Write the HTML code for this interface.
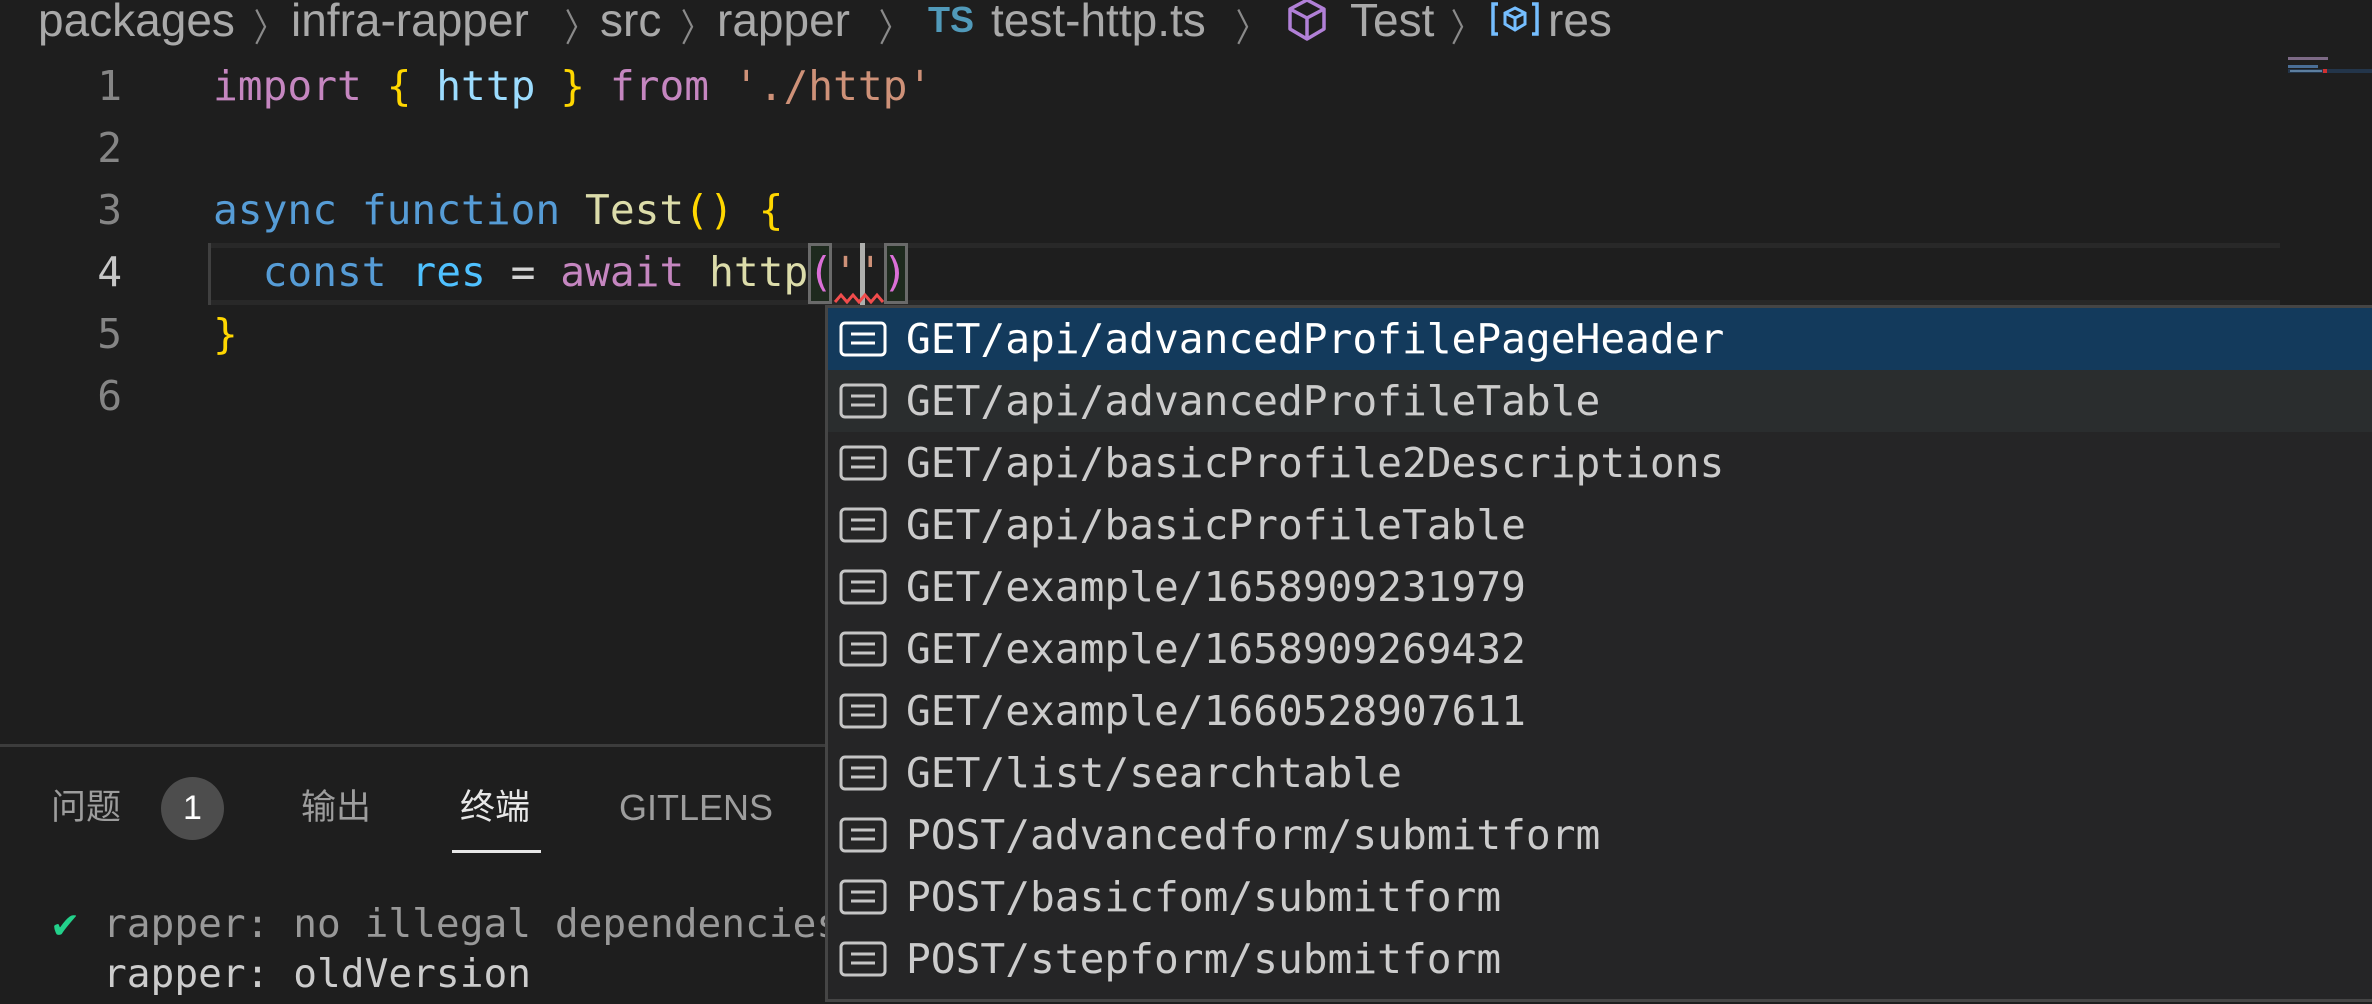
<!DOCTYPE html>
<html><head><meta charset="utf-8"><style>
*{margin:0;padding:0;box-sizing:border-box}
body{width:2372px;height:1004px;background:#1e1e1e;overflow:hidden;position:relative;font-family:"Liberation Sans","Noto Sans CJK SC",sans-serif}
.a{position:absolute;white-space:pre}
.bc{font-size:46px;color:#a9a9a9;top:-6px;line-height:52px}
.chev{font-size:38px;color:#8a8a8a;top:-3px;transform:scaleX(0.8)}
.mono{font-family:"DejaVu Sans Mono","Liberation Mono",monospace;font-size:41.2px;line-height:62px}
.ln{color:#858585;width:60px;text-align:right;left:62px}
.item{position:absolute;left:828px;width:1544px;height:62px}
.item svg{position:absolute;left:11px;top:13px}
.item span{position:absolute;left:78px;top:0;font-family:"DejaVu Sans Mono","Liberation Mono",monospace;font-size:41.2px;line-height:62px;color:#cccccc;white-space:pre}
</style></head><body>

<div class="a bc" style="left:38px">packages</div>
<div class="a chev" style="left:250px">〉</div>
<div class="a bc" style="left:291px">infra-rapper</div>
<div class="a chev" style="left:561px">〉</div>
<div class="a bc" style="left:600px">src</div>
<div class="a chev" style="left:677px">〉</div>
<div class="a bc" style="left:717px">rapper</div>
<div class="a chev" style="left:875px">〉</div>
<div class="a" style="left:928px;top:-2px;font-size:36px;font-weight:bold;color:#519aba;line-height:44px">TS</div>
<div class="a bc" style="left:991px">test-http.ts</div>
<div class="a chev" style="left:1232px">〉</div>
<svg class="a" style="left:1285px;top:-2px" width="44" height="44" viewBox="0 0 44 44"><path d="M22 2 L39 11 L39 31 L22 41 L5 31 L5 11 Z M5 11 L22 20 L39 11 M22 20 L22 41" fill="none" stroke="#b180d7" stroke-width="3.5" stroke-linejoin="round"/></svg>
<div class="a bc" style="left:1350px">Test</div>
<div class="a chev" style="left:1447px">〉</div>
<svg class="a" style="left:1490px;top:2px" width="50" height="34" viewBox="0 0 50 34"><path d="M8 2 H3 V32 H8 M42 2 H47 V32 H42" fill="none" stroke="#75beff" stroke-width="3.5"/><path d="M25 6 L35 11 L35 22 L25 28 L15 22 L15 11 Z M15 11 L25 16 L35 11 M25 16 L25 28" fill="none" stroke="#75beff" stroke-width="3"/></svg>
<div class="a bc" style="left:1548px">res</div>

<div class="a" style="left:2288px;top:57px;width:40px;height:3px;background:#7d6a86"></div>
<div class="a" style="left:2288px;top:65px;width:30px;height:3px;background:#4a6e96"></div>
<div class="a" style="left:2288px;top:69px;width:84px;height:4px;background:#23354a"></div>
<div class="a" style="left:2290px;top:70px;width:32px;height:2px;background:#5d7fa0"></div>
<div class="a" style="left:2323px;top:69px;width:4px;height:4px;background:#d03030"></div>

<div class="a" style="left:210px;top:243px;width:2070px;height:62px;border-top:5px solid #282828;border-bottom:5px solid #282828"></div>
<div class="a" style="left:208px;top:243px;width:3px;height:62px;background:#404040"></div>

<div class="a mono ln" style="top:55px">1</div>
<div class="a mono ln" style="top:117px">2</div>
<div class="a mono ln" style="top:179px">3</div>
<div class="a mono ln" style="top:241px;color:#c6c6c6">4</div>
<div class="a mono ln" style="top:303px">5</div>
<div class="a mono ln" style="top:365px">6</div>

<div class="a mono" style="left:213px;top:55px"><span style="color:#c586c0">import</span> <span style="color:#ffd700">{</span> <span style="color:#9cdcfe">http</span> <span style="color:#ffd700">}</span> <span style="color:#c586c0">from</span> <span style="color:#ce9178">'./http'</span></div>
<div class="a mono" style="left:213px;top:179px"><span style="color:#569cd6">async</span> <span style="color:#569cd6">function</span> <span style="color:#dcdcaa">Test</span><span style="color:#ffd700">()</span> <span style="color:#ffd700">{</span></div>
<div class="a" style="left:808px;top:243px;width:24px;height:61px;border:3px solid #6a6a6a;background:#1e2a1e"></div>
<div class="a" style="left:884px;top:243px;width:24px;height:61px;border:3px solid #6a6a6a;background:#1e2a1e"></div>
<div class="a mono" style="left:213px;top:241px"><span style="color:#d4d4d4">  </span><span style="color:#569cd6">const</span> <span style="color:#4fc1ff">res</span> <span style="color:#d4d4d4">=</span> <span style="color:#c586c0">await</span> <span style="color:#dcdcaa">http</span><span style="color:#da70d6">(</span><span style="color:#ce9178">''</span><span style="color:#da70d6">)</span></div>
<div class="a" style="left:860px;top:243px;width:5px;height:62px;background:#aeafad"></div>
<svg class="a" style="left:834px;top:292px" width="50" height="12"><path d="M1 10 L7 3 L13 10 L19 3 L25 10 L31 3 L37 10 L43 3 L49 10" fill="none" stroke="#f14c4c" stroke-width="3"/></svg>
<div class="a mono" style="left:213px;top:303px;color:#ffd700">}</div>

<div class="a" style="left:0;top:744px;width:2372px;height:3px;background:#3c3c3c"></div>
<div class="a" style="left:51px;top:786px;font-size:35px;color:#9d9d9d;line-height:44px">问题</div>
<div class="a" style="left:161px;top:777px;width:63px;height:63px;border-radius:50%;background:#4d4d4d;color:#fff;font-size:34px;text-align:center;line-height:63px">1</div>
<div class="a" style="left:301px;top:786px;font-size:35px;color:#9d9d9d;line-height:44px">输出</div>
<div class="a" style="left:460px;top:786px;font-size:35px;color:#e7e7e7;line-height:44px">终端</div>
<div class="a" style="left:452px;top:850px;width:89px;height:3px;background:#e7e7e7"></div>
<div class="a" style="left:619px;top:786px;font-size:36px;color:#9d9d9d;line-height:44px">GITLENS</div>
<div class="a" style="left:50px;top:898px;font-size:36px;color:#23d18b;line-height:56px">✔</div>
<div class="a mono" style="left:103px;top:896px;font-size:39.5px;line-height:56px;color:#999">rapper: no illegal dependencies</div>
<div class="a mono" style="left:103px;top:946px;font-size:39.5px;line-height:56px;color:#ccc">rapper: oldVersion</div>

<div class="a" style="left:825px;top:305px;width:1547px;height:697px;background:#252526;border:3px solid #454545;border-right:none"></div>
<div class="item" style="top:308px;background:#133a5c"><svg width="50" height="36" viewBox="0 0 50 36"><rect x="2" y="2" width="44" height="32" rx="4" fill="none" stroke="#fff" stroke-width="3"/><path d="M12 13 H36 M12 22 H36" stroke="#fff" stroke-width="3"/></svg><span style="color:#fff">GET/api/advancedProfilePageHeader</span></div>
<div class="item" style="top:370px;background:#2a2d2e"><svg width="50" height="36" viewBox="0 0 50 36"><rect x="2" y="2" width="44" height="32" rx="4" fill="none" stroke="#c5c5c5" stroke-width="3"/><path d="M12 13 H36 M12 22 H36" stroke="#c5c5c5" stroke-width="3"/></svg><span>GET/api/advancedProfileTable</span></div>
<div class="item" style="top:432px"><svg width="50" height="36" viewBox="0 0 50 36"><rect x="2" y="2" width="44" height="32" rx="4" fill="none" stroke="#c5c5c5" stroke-width="3"/><path d="M12 13 H36 M12 22 H36" stroke="#c5c5c5" stroke-width="3"/></svg><span>GET/api/basicProfile2Descriptions</span></div>
<div class="item" style="top:494px"><svg width="50" height="36" viewBox="0 0 50 36"><rect x="2" y="2" width="44" height="32" rx="4" fill="none" stroke="#c5c5c5" stroke-width="3"/><path d="M12 13 H36 M12 22 H36" stroke="#c5c5c5" stroke-width="3"/></svg><span>GET/api/basicProfileTable</span></div>
<div class="item" style="top:556px"><svg width="50" height="36" viewBox="0 0 50 36"><rect x="2" y="2" width="44" height="32" rx="4" fill="none" stroke="#c5c5c5" stroke-width="3"/><path d="M12 13 H36 M12 22 H36" stroke="#c5c5c5" stroke-width="3"/></svg><span>GET/example/1658909231979</span></div>
<div class="item" style="top:618px"><svg width="50" height="36" viewBox="0 0 50 36"><rect x="2" y="2" width="44" height="32" rx="4" fill="none" stroke="#c5c5c5" stroke-width="3"/><path d="M12 13 H36 M12 22 H36" stroke="#c5c5c5" stroke-width="3"/></svg><span>GET/example/1658909269432</span></div>
<div class="item" style="top:680px"><svg width="50" height="36" viewBox="0 0 50 36"><rect x="2" y="2" width="44" height="32" rx="4" fill="none" stroke="#c5c5c5" stroke-width="3"/><path d="M12 13 H36 M12 22 H36" stroke="#c5c5c5" stroke-width="3"/></svg><span>GET/example/1660528907611</span></div>
<div class="item" style="top:742px"><svg width="50" height="36" viewBox="0 0 50 36"><rect x="2" y="2" width="44" height="32" rx="4" fill="none" stroke="#c5c5c5" stroke-width="3"/><path d="M12 13 H36 M12 22 H36" stroke="#c5c5c5" stroke-width="3"/></svg><span>GET/list/searchtable</span></div>
<div class="item" style="top:804px"><svg width="50" height="36" viewBox="0 0 50 36"><rect x="2" y="2" width="44" height="32" rx="4" fill="none" stroke="#c5c5c5" stroke-width="3"/><path d="M12 13 H36 M12 22 H36" stroke="#c5c5c5" stroke-width="3"/></svg><span>POST/advancedform/submitform</span></div>
<div class="item" style="top:866px"><svg width="50" height="36" viewBox="0 0 50 36"><rect x="2" y="2" width="44" height="32" rx="4" fill="none" stroke="#c5c5c5" stroke-width="3"/><path d="M12 13 H36 M12 22 H36" stroke="#c5c5c5" stroke-width="3"/></svg><span>POST/basicfom/submitform</span></div>
<div class="item" style="top:928px"><svg width="50" height="36" viewBox="0 0 50 36"><rect x="2" y="2" width="44" height="32" rx="4" fill="none" stroke="#c5c5c5" stroke-width="3"/><path d="M12 13 H36 M12 22 H36" stroke="#c5c5c5" stroke-width="3"/></svg><span>POST/stepform/submitform</span></div>
</body></html>
